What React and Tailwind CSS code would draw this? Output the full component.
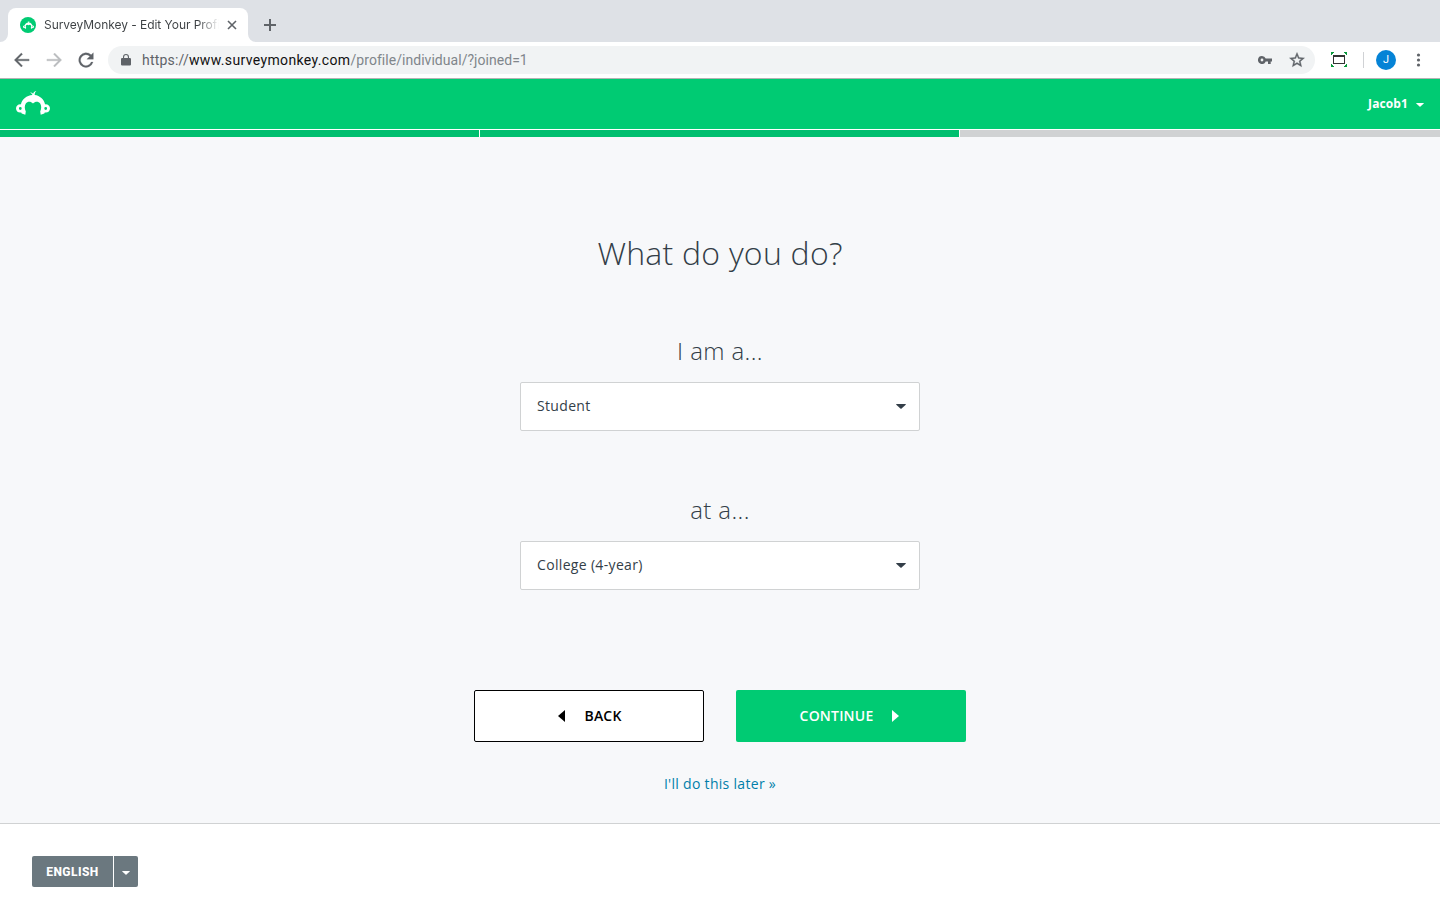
function Caret({ className }) {
  return (
    <svg className={className} viewBox="0 0 10 6" preserveAspectRatio="none" fill="currentColor">
      <path d="M0 0.5Q0 0 .6 0H9.4Q10 0 10 .5L5.6 5.3Q5 5.8 4.4 5.3Z" />
    </svg>
  );
}

function Logo({ className }) {
  return (
    <svg className={className} viewBox="0 0 34 24" fill="none">
      <path
        fill="currentColor"
        fillRule="evenodd"
        d="M16.4 4.1C16 2.6 15 1.9 13.6 1.5C15.3 1.2 16.4 1.8 17.1 2.8C17.5 1.2 18.5.3 20.4 0C19.1 1 18.6 2.4 18.7 4.1C23.9 4.7 28 8.4 29.1 13.4C31.8 13.1 34 15 34 17.5C34 20.2 31.5 22.1 28.8 21.4L28.3 22.6L24.7 23.8L24.2 20.4C25.6 17.8 25.5 14.8 24.2 12.6C22.4 10.2 19.3 10.4 17 12.4C14.7 10.4 11.6 10.2 9.8 12.6C8.5 14.8 8.4 17.8 9.8 20.4L9.3 23.8L5.7 22.6L5.2 21.4C2.5 22.1 0 20.2 0 17.5C0 15 2.2 13.1 4.9 13.4C6 8.4 10.6 4.6 16.4 4.1ZM4.3 16.1A1.4 1.4 0 1 0 4.3 18.9A1.4 1.4 0 1 0 4.3 16.1ZM29.7 16.1A1.4 1.4 0 1 0 29.7 18.9A1.4 1.4 0 1 0 29.7 16.1Z"
      />
    </svg>
  );
}

function BrowserTabs() {
  return (
    <div className="flex h-[42px] items-end bg-[#dee1e6]">
      <svg className="h-2 w-2" viewBox="0 0 8 8"><path d="M8 0V8H0A8 8 0 0 0 8 0Z" fill="#fff" /></svg>
      <div className="flex h-[34px] w-[240px] items-center rounded-t-lg bg-white pl-3">
        <span className="flex size-4 shrink-0 items-center justify-center rounded-full bg-[#00cb73] text-white">
          <Logo className="h-2 w-[11px]" />
        </span>
        <span className="ml-2 w-[175px] shrink-0 whitespace-nowrap bg-linear-to-r from-[#3c4043] from-88% to-transparent bg-clip-text font-['Inter',sans-serif] text-[12px] leading-4 tracking-[-0.05px] text-transparent">
          SurveyMonkey - Edit Your Profi
        </span>
        <svg className="ml-2 size-[10px] shrink-0" viewBox="0 0 10 10" stroke="#5f6368" strokeWidth="1.6">
          <path d="M1 1L9 9M9 1L1 9" />
        </svg>
      </div>
      <svg className="h-2 w-2" viewBox="0 0 8 8"><path d="M0 0V8H8A8 8 0 0 1 0 0Z" fill="#fff" /></svg>
      <svg className="mb-[11px] ml-2 size-3" viewBox="0 0 12 12" stroke="#5f6368" strokeWidth="2">
        <path d="M6 0V12M0 6H12" />
      </svg>
    </div>
  );
}

function Toolbar() {
  return (
    <div className="flex h-[37px] items-center border-b border-[#b3b3b3] bg-white pl-3">
      <svg className="size-5 shrink-0" viewBox="0 0 24 24" fill="#5f6368" stroke="#5f6368" strokeWidth=".4">
        <path d="M20.5 11H6.6l6-6L11.2 3.6 2.8 12l8.4 8.4L12.6 19l-6-6H20.5z" />
      </svg>
      <svg className="ml-3 size-5 shrink-0" viewBox="0 0 24 24" fill="#babcbe" stroke="#babcbe" strokeWidth=".4">
        <path d="M3.5 11H17.4l-6-6L12.8 3.6 21.2 12l-8.4 8.4L11.4 19l6-6H3.5z" />
      </svg>
      <svg className="ml-3 size-5 shrink-0" viewBox="0 0 24 24" fill="#5f6368" stroke="#5f6368" strokeWidth=".3">
        <path d="M18.2 5.8A8.8 8.8 0 1 0 20.5 14.5H18.2A6.6 6.6 0 1 1 16.6 7.4L13 11H20.8V3.2z" />
      </svg>
      <div className="ml-3 flex h-7 w-[1207px] shrink-0 items-center rounded-full bg-[#f1f3f4] pl-[13px] font-['Roboto',sans-serif] text-[14px] leading-5 text-[#80868b]">
        <svg className="h-3 w-[10px]" viewBox="0 0 10 12" fill="#5f6368">
          <path fillRule="evenodd" d="M1.1 4H2V3a3 3 0 0 1 6 0V4h.9Q10 4 10 5v5.6Q10 11.6 8.900 11.600H1.100Q0 11.600 0 10.600V5Q0 4 1.100 4zM3.100 4h3.800V3a1.900 1.900 0 0 0-3.800 0z" />
        </svg>
        <span className="ml-[11px] flex-1 tracking-[0.04px]">
          <span className="tracking-[0.2px] text-[#5f6368]">https://</span>
          <span className="tracking-[0.36px] text-[#111]">www.surveymonkey.com</span>
          /profile/individual/?joined=1
        </span>
        <svg className="h-2 w-[14px]" viewBox="0 0 14 8" fill="#5f6368">
          <path fillRule="evenodd" d="M4 0A4 4 0 0 1 7.700 2.600H14V5.400H12.700V8H10V5.400H7.700A4 4 0 1 1 4 0ZM4 2.600A1.400 1.400 0 1 0 4 5.400A1.400 1.400 0 1 0 4 2.600Z" />
        </svg>
        <svg className="mr-[9px] ml-4 size-[18px]" viewBox="0 0 24 24" fill="#5f6368" stroke="#5f6368" strokeWidth=".5">
          <path d="M22 9.240l-7.190-.62L12 2 9.190 8.630 2 9.240l5.460 4.730L5.820 21 12 17.270 18.180 21l-1.630-7.030L22 9.240zM12 15.400l-3.760 2.270 1-4.280-3.320-2.880 4.380-.38L12 6.100l1.710 4.040 4.380.38-3.320 2.880 1 4.280L12 15.400z" />
        </svg>
      </div>
      <svg className="mb-px ml-4 h-[15px] w-4 shrink-0" viewBox="0 0 16 15">
        <path fill="#333" fillRule="evenodd" d="M2 3H14V12H2ZM3 5V11H13V5Z" />
        <path fill="#0a9a3c" d="M0 0H3V1H2V2H1V3H0ZM16 0H13V1H14V2H15V3H16ZM0 15H3V14H2V13H1V12H0ZM16 15H13V14H14V13H15V12H16Z" />
      </svg>
      <span className="ml-4 h-4 w-px bg-[#d0d2d5]" />
      <span className="ml-3 flex size-5 items-center justify-center rounded-full bg-[#0583d6] font-['Roboto',sans-serif] text-[11px] text-white">J</span>
      <svg className="ml-5 h-[14px] w-[5px]" viewBox="0 0 5 14" fill="#5f6368">
        <circle cx="2.500" cy="2" r="1.600" /><circle cx="2.500" cy="7" r="1.600" /><circle cx="2.500" cy="12" r="1.600" />
      </svg>
    </div>
  );
}

function Field({ label, value }) {
  return (
    <div className="flex flex-col items-center">
      <h2 className="h-8 text-[24px] leading-8 font-light tracking-[0.4px]">{label}</h2>
      <button className="mt-[15px] flex h-[49px] w-[400px] items-center justify-between rounded-[2px] border border-[#d0d2d3] bg-white pr-[13px] pl-4 text-[14px] tracking-[0.33px]">
        <span className="pb-0.5">{value}</span>
        <Caret className="h-[5px] w-[10px]" />
      </button>
    </div>
  );
}

export default function App() {
  return (
    <div className="flex h-[900px] w-[1440px] flex-col overflow-hidden bg-white font-['Open_Sans',sans-serif] text-[#333e48]">
      <BrowserTabs />
      <Toolbar />
      <header className="flex h-[50px] shrink-0 items-center justify-between bg-[#00cb73] px-4 text-white">
        <Logo className="mb-[3px] h-6 w-[34px]" />
        <div className="flex items-center gap-2 text-[12px] font-bold tracking-[0.1px]">
          <span>Jacob1</span>
          <Caret className="mt-[2px] h-1 w-2" />
        </div>
      </header>
      <div className="flex h-2 shrink-0 gap-px border-t border-white">
        <div className="w-[479px] bg-[#00bf6f]" />
        <div className="w-[479px] bg-[#00bf6f]" />
        <div className="flex-1 bg-[#d0d2d3]" />
      </div>
      <main className="flex h-[687px] shrink-0 flex-col items-center border-b border-[#d0d2d3] bg-[#f7f8fa] pt-[92px]">
        <h1 className="h-12 text-[32px] leading-[48px] font-light tracking-[0.25px]">What do you do?</h1>
        <div className="mt-[58px] flex flex-col gap-[63px]">
          <Field label="I am a..." value="Student" />
          <Field label="at a..." value="College (4-year)" />
        </div>
        <div className="mt-[100px] flex gap-8 text-[14px] font-semibold tracking-[0.2px]">
          <button className="flex h-[52px] w-[230px] items-center justify-center gap-[19px] rounded-[2px] border border-black bg-white pb-px pl-[2px] text-black">
            <svg className="h-3 w-[7px]" viewBox="0 0 7 12"><path d="M7 0V12L0 6Z" /></svg>
            BACK
          </button>
          <button className="flex h-[52px] w-[230px] items-center justify-center gap-[19px] rounded-[2px] bg-[#00cb73] pr-[3px] pb-px text-white">
            CONTINUE
            <svg className="h-3 w-[7px]" viewBox="0 0 7 12" fill="currentColor"><path d="M0 0V12L7 6Z" /></svg>
          </button>
        </div>
        <a className="mt-8 text-[14px] leading-5 tracking-[0.3px] text-[#007faa]">I'll do this later »</a>
      </main>
      <footer className="flex gap-px pt-8 pl-8 text-white">
        <button className="h-[31px] w-[81px] rounded-l-[2px] bg-[#6b787f] font-['Roboto',sans-serif] text-[12px] font-extrabold tracking-[0.45px]">ENGLISH</button>
        <button className="flex h-[31px] w-6 items-center justify-center rounded-r-[2px] bg-[#6b787f]">
          <Caret className="mt-[3px] h-1 w-2" />
        </button>
      </footer>
    </div>
  );
}
